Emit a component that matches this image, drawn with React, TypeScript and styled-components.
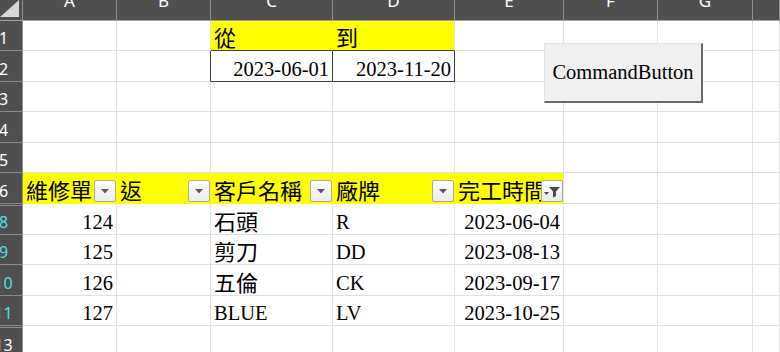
import React from "react";
import styled, { createGlobalStyle } from "styled-components";

const GRID = "#e0e0e0";
const HEAD_BG = "#4f4f4f";
const HEAD_LINE = "#8f8f8f";
const YELLOW = "#ffff00";
const BOX = "#3c3c3c";
const CYAN = "#4ee0e8";

const GlobalStyle = createGlobalStyle`
  *, *::before, *::after { box-sizing: border-box; }
  html, body { margin: 0; padding: 0; background: #ffffff; }
  body {
    overflow: hidden;
    font-family: "Liberation Serif", "Noto Sans CJK TC", serif;
  }
`;

type Align = "left" | "right";
type Filter = "arrow" | "funnel";

interface CellSpec {
  text?: string;
  align?: Align;
  cjk?: boolean;
  fill?: string;
  right?: string;
  bottom?: string;
  filter?: Filter;
}

interface RowInfo {
  label: string;
  height: number;
  hidden?: boolean;
  filtered?: boolean;
}

const columns = [
  { id: "A", label: "A" },
  { id: "B", label: "B" },
  { id: "C", label: "C" },
  { id: "D", label: "D" },
  { id: "E", label: "E" },
  { id: "F", label: "F" },
  { id: "G", label: "G" },
  { id: "H", label: "" },
];

const rows: RowInfo[] = [
  { label: "1", height: 30 },
  { label: "2", height: 31 },
  { label: "3", height: 30 },
  { label: "4", height: 31 },
  { label: "5", height: 30 },
  { label: "6", height: 31 },
  { label: "7", height: 2, hidden: true },
  { label: "8", height: 29, filtered: true },
  { label: "9", height: 30, filtered: true },
  { label: "10", height: 31, filtered: true },
  { label: "11", height: 30, filtered: true },
  { label: "12", height: 2, hidden: true },
  { label: "13", height: 30 },
];

const head = (text: string, filter: Filter = "arrow", right = YELLOW): CellSpec => ({
  text,
  cjk: true,
  fill: YELLOW,
  right,
  bottom: YELLOW,
  filter,
});

const cells: Record<string, CellSpec> = {
  C1: { text: "從", cjk: true, fill: YELLOW, right: YELLOW, bottom: BOX },
  D1: { text: "到", cjk: true, fill: YELLOW, bottom: BOX },
  B2: { right: BOX },
  C2: { text: "2023-06-01", align: "right", right: BOX, bottom: BOX },
  D2: { text: "2023-11-20", align: "right", right: BOX, bottom: BOX },
  A6: head("維修單"),
  B6: head("返"),
  C6: head("客戶名稱"),
  D6: head("廠牌"),
  E6: head("完工時間", "funnel", GRID),
  A8: { text: "124", align: "right" },
  C8: { text: "石頭", cjk: true },
  D8: { text: "R" },
  E8: { text: "2023-06-04", align: "right" },
  A9: { text: "125", align: "right" },
  C9: { text: "剪刀", cjk: true },
  D9: { text: "DD" },
  E9: { text: "2023-08-13", align: "right" },
  A10: { text: "126", align: "right" },
  C10: { text: "五倫", cjk: true },
  D10: { text: "CK" },
  E10: { text: "2023-09-17", align: "right" },
  A11: { text: "127", align: "right" },
  C11: { text: "BLUE" },
  D11: { text: "LV" },
  E11: { text: "2023-10-25", align: "right" },
};

const Page = styled.div`
  position: relative;
  width: 780px;
  height: 352px;
  overflow: hidden;
  background: #ffffff;
`;

const Sheet = styled.div<{ $rows: string }>`
  display: grid;
  grid-template-columns: 23px 94px 94px 122px 122px 109px 94px 95px 1fr;
  grid-template-rows: ${(p) => p.$rows};
`;

const Corner = styled.div`
  display: flex;
  align-items: flex-end;
  justify-content: flex-end;
  padding: 0 3px 3px 0;
  background: ${HEAD_BG};
  border-right: 1px solid ${HEAD_LINE};
  border-bottom: 1px solid #a3a3a3;
`;

const SelectAll = styled.div`
  width: 19px;
  height: 17px;
  background: #d6d6d6;
  clip-path: polygon(100% 0, 100% 100%, 0 100%);
`;

const ColHead = styled.div`
  display: flex;
  justify-content: center;
  align-items: flex-start;
  overflow: hidden;
  background: ${HEAD_BG};
  border-right: 1px solid ${HEAD_LINE};
  border-bottom: 1px solid #a3a3a3;
  color: #ffffff;
  font-family: "Noto Sans", sans-serif;
  font-size: 17px;
  line-height: 16px;
`;

const ColLetter = styled.span`
  margin-top: -7px;
`;

const RowHead = styled.div<{ $filtered?: boolean }>`
  display: flex;
  align-items: flex-end;
  overflow: hidden;
  background: ${HEAD_BG};
  border-right: 1px solid ${HEAD_LINE};
  border-bottom: 1px solid #8a8a8a;
  color: ${(p) => (p.$filtered ? CYAN : "#ffffff")};
  font-family: "Noto Sans", sans-serif;
  font-size: 16px;
  line-height: 24px;
`;

const RowNum = styled.span`
  flex: none;
  width: 27px;
  margin-left: -10px;
  text-align: center;
  white-space: nowrap;
`;

const Cell = styled.div<{
  $fill: string;
  $right: string;
  $bottom: string;
  $align: Align;
  $cjk: boolean;
  $filter: boolean;
}>`
  display: flex;
  align-items: flex-end;
  justify-content: ${(p) => (p.$align === "right" ? "flex-end" : "flex-start")};
  min-width: 0;
  overflow: hidden;
  padding: 0 ${(p) => (p.$filter ? 0 : 3)}px 0 3px;
  background: ${(p) => p.$fill};
  border-right: 1px solid ${(p) => p.$right};
  border-bottom: 1px solid ${(p) => p.$bottom};
  color: #000000;
  font-size: ${(p) => (p.$cjk ? 22 : 20.5)}px;
  line-height: ${(p) => (p.$cjk ? 22 : 24)}px;
  white-space: nowrap;
`;

const CellText = styled.span`
  flex: 0 1 auto;
  min-width: 0;
  overflow: hidden;
`;

const FilterButton = styled.span`
  flex: none;
  align-self: flex-end;
  display: flex;
  align-items: center;
  justify-content: center;
  width: 22px;
  height: 22px;
  margin-left: auto;
  margin-bottom: 1px;
  background: linear-gradient(#ffffff, #ebebeb);
  border: 1px solid #a9a9a9;
  border-radius: 2px;
`;

const CommandButton = styled.button`
  position: absolute;
  left: 544px;
  top: 43px;
  width: 159px;
  height: 60px;
  padding: 0;
  background: #f0f0f0;
  border-style: solid;
  border-width: 1px 2px 2px 1px;
  border-color: #e3e3e3 #696969 #696969 #e3e3e3;
  color: #000000;
  font-family: "Liberation Serif", serif;
  font-size: 20.5px;
  cursor: default;
`;

const ArrowIcon = () => (
  <svg width="8" height="5" viewBox="0 0 8 5">
    <polygon points="0,0 8,0 4,4.5" fill="#5a5a5a" />
  </svg>
);

const FunnelIcon = () => (
  <svg width="20" height="20" viewBox="0 0 20 20">
    <polygon points="2,11 7,11 4.5,14" fill="#4a4a4a" />
    <polygon points="7,6 18,6 14,10.5 14,15 11,16.5 11,10.5" fill="#4a4a4a" />
  </svg>
);

const App: React.FC = () => {
  const template = ["21px", ...rows.map((r) => `${r.height}px`)].join(" ");

  return (
    <Page>
      <GlobalStyle />
      <Sheet $rows={template}>
        <Corner>
          <SelectAll />
        </Corner>
        {columns.map((col) => (
          <ColHead key={col.id}>
            <ColLetter>{col.label}</ColLetter>
          </ColHead>
        ))}
        {rows.map((row) => (
          <React.Fragment key={row.label}>
            <RowHead $filtered={row.filtered}>
              {!row.hidden && <RowNum>{row.label}</RowNum>}
            </RowHead>
            {columns.map((col) => {
              const spec = cells[col.id + row.label] ?? {};
              return (
                <Cell
                  key={col.id}
                  $fill={spec.fill ?? "#ffffff"}
                  $right={spec.right ?? GRID}
                  $bottom={spec.bottom ?? (row.hidden ? "#ffffff" : GRID)}
                  $align={spec.align ?? "left"}
                  $cjk={!!spec.cjk}
                  $filter={!!spec.filter}
                >
                  {spec.text && <CellText>{spec.text}</CellText>}
                  {spec.filter && (
                    <FilterButton>
                      {spec.filter === "funnel" ? <FunnelIcon /> : <ArrowIcon />}
                    </FilterButton>
                  )}
                </Cell>
              );
            })}
          </React.Fragment>
        ))}
      </Sheet>
      <CommandButton>CommandButton</CommandButton>
    </Page>
  );
};

export default App;
